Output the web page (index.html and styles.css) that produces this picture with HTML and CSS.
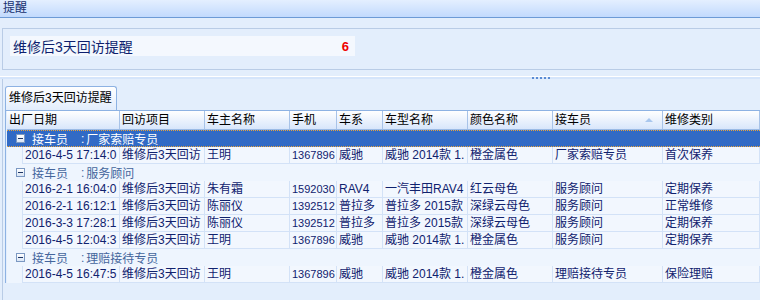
FILE: index.html
```html
<!DOCTYPE html>
<html lang="zh-CN">
  <head>
    <meta charset="UTF-8" />
    <title>提醒</title>
    <link rel="stylesheet" href="styles.css">
  </head>
  <body>
    <div class="titlebar">提醒</div>

    <div class="summary">
      <div class="summary-item">
        <span>维修后3天回访提醒</span>
        <span class="count">6</span>
      </div>
    </div>

    <div class="splitter">
      <span class="grip"></span><span class="grip"></span><span class="grip"></span><span class="grip"></span><span class="grip"></span>
    </div>

    <div class="lower">
      <div class="tabs">
        <div class="tab">维修后3天回访提醒</div>
      </div>

      <div class="grid">
        <div class="grid-head">
          <div class="hcell">出厂日期</div>
          <div class="hcell">回访项目</div>
          <div class="hcell">车主名称</div>
          <div class="hcell">手机</div>
          <div class="hcell">车系</div>
          <div class="hcell">车型名称</div>
          <div class="hcell">颜色名称</div>
          <div class="hcell sorted">接车员<span class="sort-up"></span></div>
          <div class="hcell">维修类别</div>
        </div>

        <div class="group focused">
          <span class="collapse"></span>接车员<span class="colon">:</span>厂家索赔专员
        </div>
        <div class="row">
          <div class="indent"></div>
          <div class="cell">2016-4-5 17:14:0</div>
          <div class="cell">维修后3天回访</div>
          <div class="cell">王明</div>
          <div class="cell num">1367896</div>
          <div class="cell">威驰</div>
          <div class="cell">威驰 2014款 1.</div>
          <div class="cell">橙金属色</div>
          <div class="cell">厂家索赔专员</div>
          <div class="cell">首次保养</div>
        </div>

        <div class="group">
          <span class="collapse"></span>接车员<span class="colon">:</span>服务顾问
        </div>
        <div class="row">
          <div class="indent"></div>
          <div class="cell">2016-2-1 16:04:0</div>
          <div class="cell">维修后3天回访</div>
          <div class="cell">朱有霜</div>
          <div class="cell num">1592030</div>
          <div class="cell">RAV4</div>
          <div class="cell">一汽丰田RAV4</div>
          <div class="cell">红云母色</div>
          <div class="cell">服务顾问</div>
          <div class="cell">定期保养</div>
        </div>
        <div class="row">
          <div class="indent"></div>
          <div class="cell">2016-2-1 16:12:1</div>
          <div class="cell">维修后3天回访</div>
          <div class="cell">陈丽仪</div>
          <div class="cell num">1392512</div>
          <div class="cell">普拉多</div>
          <div class="cell">普拉多 2015款</div>
          <div class="cell">深绿云母色</div>
          <div class="cell">服务顾问</div>
          <div class="cell">正常维修</div>
        </div>
        <div class="row">
          <div class="indent"></div>
          <div class="cell">2016-3-3 17:28:1</div>
          <div class="cell">维修后3天回访</div>
          <div class="cell">陈丽仪</div>
          <div class="cell num">1392512</div>
          <div class="cell">普拉多</div>
          <div class="cell">普拉多 2015款</div>
          <div class="cell">深绿云母色</div>
          <div class="cell">服务顾问</div>
          <div class="cell">定期保养</div>
        </div>
        <div class="row">
          <div class="indent"></div>
          <div class="cell">2016-4-5 12:04:3</div>
          <div class="cell">维修后3天回访</div>
          <div class="cell">王明</div>
          <div class="cell num">1367896</div>
          <div class="cell">威驰</div>
          <div class="cell">威驰 2014款 1.</div>
          <div class="cell">橙金属色</div>
          <div class="cell">服务顾问</div>
          <div class="cell">定期保养</div>
        </div>

        <div class="group">
          <span class="collapse"></span>接车员<span class="colon">:</span>理赔接待专员
        </div>
        <div class="row">
          <div class="indent"></div>
          <div class="cell">2016-4-5 16:47:5</div>
          <div class="cell">维修后3天回访</div>
          <div class="cell">王明</div>
          <div class="cell num">1367896</div>
          <div class="cell">威驰</div>
          <div class="cell">威驰 2014款 1.</div>
          <div class="cell">橙金属色</div>
          <div class="cell">理赔接待专员</div>
          <div class="cell">保险理赔</div>
        </div>
      </div>
    </div>
  </body>
</html>
```

FILE: styles.css
```css
* {
  box-sizing: border-box;
}

body {
  margin: 0;
  width: 760px;
  height: 300px;
  overflow: hidden;
  background-color: #e3eefc;
  font-family: "Liberation Sans", "Noto Sans CJK SC", sans-serif;
  font-size: 12px;
  color: #10226e;
}

.titlebar {
  height: 18px;
  padding-left: 3px;
  line-height: 17px;
  color: #15306e;
  background: linear-gradient(#e4efff, #c2dafd);
  border-bottom: 1px solid #6d9bd6;
}

/* summary box */
.summary {
  margin: 10px 0 0 2px;
  height: 42px;
  padding: 7px 0 0 7px;
  border: 1px solid #b9cce6;
  border-right: none;
}

.summary-item {
  width: 345px;
  height: 20px;
  padding: 0 6px 0 3px;
  display: flex;
  justify-content: space-between;
  align-items: center;
  background-color: #f4f8fe;
  font-size: 14px;
  color: #0d1f6e;
}

.count {
  color: #f00000;
  font-weight: bold;
  font-size: 13px;
}

/* splitter */
.splitter {
  margin-top: 6px;
  height: 3px;
  padding-left: 532px;
  display: flex;
  gap: 2px;
  align-items: flex-end;
  border-top: 1px solid #ffffff;
  background-color: #d5e5fb;
}

.grip {
  width: 2px;
  height: 2px;
  background-color: #5b8cd4;
}

/* lower panel */
.lower {
  margin-left: 2px;
  height: 230px;
  padding: 7px 0 0 2px;
  border-left: 1px solid #b9cce6;
}

.tabs {
  display: flex;
}

.tab {
  width: 112px;
  height: 24px;
  padding-left: 3px;
  line-height: 23px;
  color: #000;
  background: linear-gradient(#ffffff, #e2edfc);
  border: 1px solid #8db2e3;
  border-bottom: none;
  border-radius: 3px 3px 0 0;
}

.grid {
  border-top: 1px solid #8db2e3;
  border-left: 1px solid #8db2e3;
  padding-left: 1px;
}

.grid-head {
  display: grid;
  grid-template-columns: 113px 85px 85px 47px 46px 85px 85px 110px 1fr;
  height: 19px;
  border-bottom: 1px solid #9bbbe6;
  background: linear-gradient(#ffffff, #d8e6fb);
}

.hcell {
  padding-left: 2px;
  line-height: 18px;
  color: #000;
  border-right: 1px solid #a8c3e8;
  white-space: nowrap;
  overflow: hidden;
}

.hcell.sorted {
  display: flex;
  justify-content: space-between;
  align-items: center;
  padding-right: 9px;
}

.sort-up {
  width: 0;
  height: 0;
  border-left: 4px solid transparent;
  border-right: 4px solid transparent;
  border-bottom: 4px solid #a9c7ee;
}

/* group rows */
.group {
  height: 17px;
  padding-left: 9px;
  display: flex;
  align-items: center;
  color: #44659c;
  background-color: #eef5fe;
  white-space: nowrap;
}

.group.focused {
  color: #ffffff;
  background-color: #316ac5;
  border-top: 1px dotted #e9a33a;
  border-bottom: 1px dotted #e9a33a;
}

.colon {
  margin: 0 2px 0 13px;
}

.collapse {
  width: 9px;
  height: 9px;
  margin-right: 7px;
  display: flex;
  align-items: center;
  justify-content: center;
  border: 1px solid #7b98c2;
  background: linear-gradient(#ffffff, #d9e5f5);
}

.collapse::after {
  content: "";
  width: 5px;
  height: 1px;
  background-color: #1e3565;
}

/* data rows */
.row {
  display: grid;
  grid-template-columns: 16px 97px 85px 85px 47px 46px 85px 85px 110px 1fr;
  height: 17px;
}

.indent {
  background-color: #eef5fe;
  border-right: 1px solid #d3e2f7;
}

.cell {
  padding-left: 2px;
  line-height: 16px;
  background-color: #f2f7fe;
  border-right: 1px solid #d3e2f7;
  border-bottom: 1px solid #d3e2f7;
  white-space: nowrap;
  overflow: hidden;
}

.cell.num {
  font-size: 11px;
}
```
